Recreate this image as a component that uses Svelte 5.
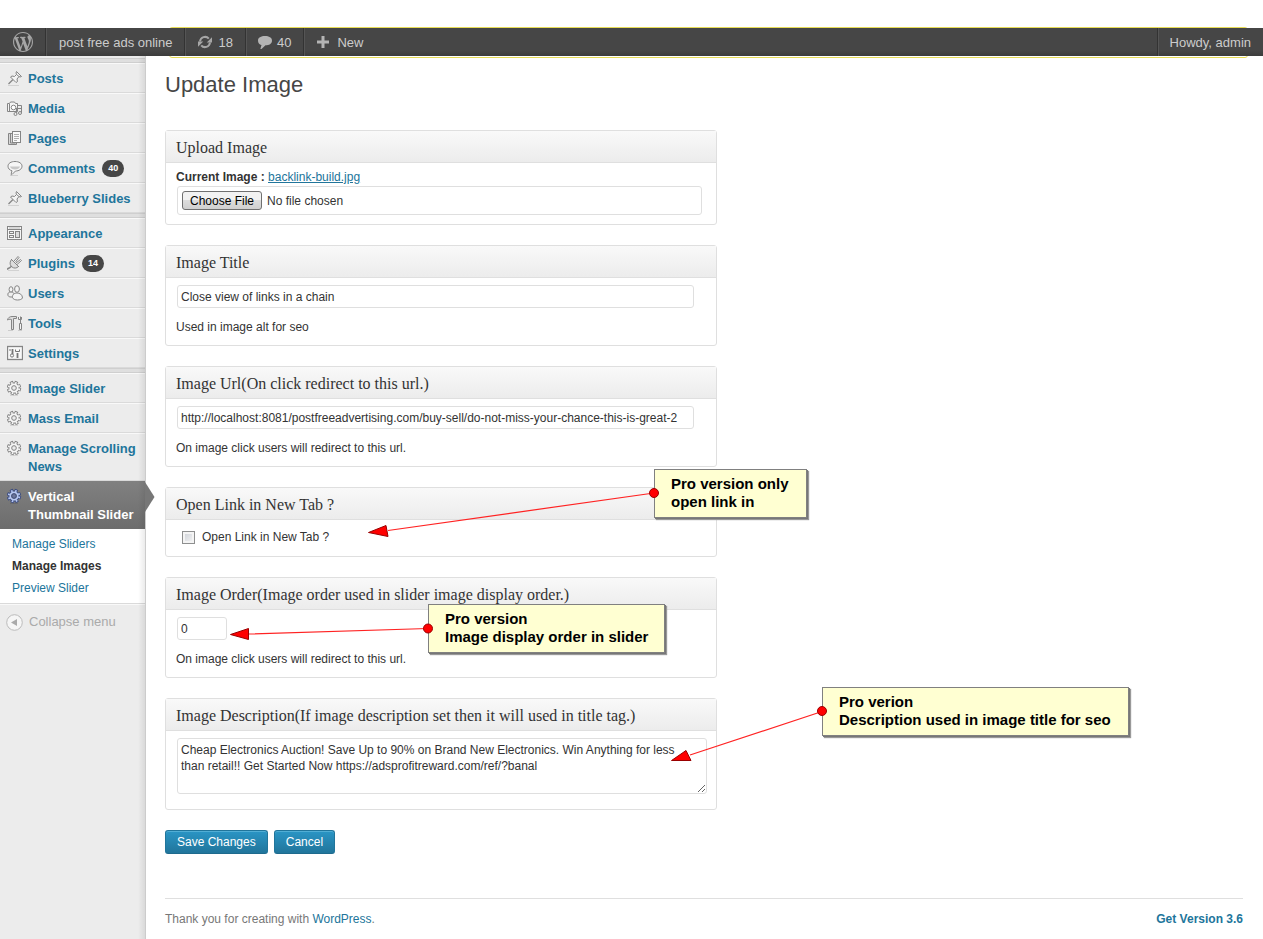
<script>
  const groups = [
    [
      { icon: 'pin', label: 'Posts' },
      { icon: 'media', label: 'Media' },
      { icon: 'pages', label: 'Pages' },
      { icon: 'comment', label: 'Comments', count: 40 },
      { icon: 'pin', label: 'Blueberry Slides' }
    ],
    [
      { icon: 'appearance', label: 'Appearance' },
      { icon: 'plug', label: 'Plugins', count: 14 },
      { icon: 'users', label: 'Users' },
      { icon: 'tools', label: 'Tools' },
      { icon: 'settings', label: 'Settings' }
    ],
    [
      { icon: 'gear', label: 'Image Slider' },
      { icon: 'gear', label: 'Mass Email' },
      { icon: 'gear', label: 'Manage Scrolling News' },
      { icon: 'gear', label: 'Vertical Thumbnail Slider', current: true }
    ]
  ];
  const submenu = [
    { label: 'Manage Sliders' },
    { label: 'Manage Images', current: true },
    { label: 'Preview Slider' }
  ];
  const description =
    'Cheap Electronics Auction! Save Up to 90% on Brand New Electronics. Win Anything for less than retail!! Get Started Now https://adsprofitreward.com/ref/?banal';
</script>

{#snippet icon(name)}
  <svg class="icon" viewBox="0 0 16 16" width="16" height="16" fill="none" stroke="#858585" stroke-width="1" aria-hidden="true">
    {#if name === 'pin'}
      <path d="M1 15.500h11" stroke="#d2d2d2" />
      <path d="M1.500 14 6 9.500" stroke-width="1.300" />
      <path d="M9.500 1.500l5 5-1.500.500-1-.500-2 2.500.500 2.500-1.500 1L3.500 7l1.500-1 2.500.500 2-2-.500-1.500z" fill="#f4f4f4" />
      <path d="M9.500 4.500l2.500 2" />
    {:else if name === 'media'}
      <path d="M.5 3.500h2l1-1.500h4l1 1.500h2v8H.5z" fill="#f4f4f4" />
      <circle cx="6.500" cy="7.500" r="2.300" fill="#fff" />
      <path d="M2.500 4v7M10.500 5.500h4v7.500" />
      <path d="M9.500 13.500V8.500h5" stroke-width="1.200" />
      <circle cx="8.500" cy="14" r="1.500" fill="#eee" /><circle cx="13" cy="13" r="1.500" fill="#eee" />
    {:else if name === 'pages'}
      <path d="M5 3.500H1.500v11h8v-2" fill="#d8d8d8" />
      <path d="M3.500 3v10h5" />
      <rect x="5.500" y="1.500" width="8" height="11" fill="#fafafa" />
      <path d="M7 4.500h5M7 6.500h5M7 8.500h5M7 10.500h3" stroke="#b0b0b0" />
    {:else if name === 'comment'}
      <path d="M3 15.500h8" stroke="#d0d0d0" />
      <path d="M8 1.500c4 0 7 1.800 7 4.700 0 3-3 4.800-6.500 4.800L5 14.500c-.500.400-1 .200-.800-.500L5 10.800C2.500 10 1 8.500 1 6.200c0-2.900 3-4.700 7-4.700z" fill="#f6f6f6" />
      <path d="M3 6.500h10c-.500 2-2.500 3-5 3s-4.500-1-5-3z" fill="#c8c8c8" stroke="none" />
    {:else if name === 'appearance'}
      <rect x=".5" y="1.500" width="14" height="13" fill="#f6f6f6" />
      <path d="M1 4.500h13" /><path d="M2 3h11" stroke="#bbb" />
      <rect x="2.500" y="6.500" width="4" height="2" /><rect x="2.500" y="10.500" width="4" height="2" /><rect x="8.500" y="6.500" width="4" height="6" fill="#ddd" />
    {:else if name === 'plug'}
      <path d="M1 15.500h11" stroke="#d2d2d2" />
      <path d="M0 14.500c1.500-2 2-.500 4-3" stroke-width="1.400" />
      <path d="M4.500 4.500l7 7c-2 2-4.500 2-6.500.500l-1-1C2.500 9 3 6.500 4.500 4.500z" fill="#ddd" />
      <path d="M7 6 11 1.500l1 1L8.500 7M10 9.500 14.500 5.500l-1-1L9 8M4 4l8 8" fill="#f4f4f4" />
    {:else if name === 'users'}
      <ellipse cx="4" cy="4.500" rx="1.900" ry="2.800" fill="#f4f4f4" />
      <path d="M1 10.500c-.800-2.500 1-3.500 3-3.500s3 1 3 2v3H4c-1.500 0-2.600-.500-3-1.500z" fill="#eee" />
      <ellipse cx="10" cy="4" rx="2.400" ry="3.300" fill="#f4f4f4" />
      <path d="M5.500 12.500C5 9.500 7.500 8 10 8s5.500 1.500 5.500 5c-1 2.500-9 3-10-.500z" fill="#f4f4f4" />
    {:else if name === 'tools'}
      <path d="M1 15.500h5M11 15.500h4" stroke="#ccc" />
      <path d="M.5 5C1 2.500 3 1.500 5 1.500h4.500v2h-3v11h-2v-10c-2-.500-3 0-4 .500z" fill="#ddd" />
      <path d="M13.500 1.500v7M11.500 2v2.500h3V2M12.500 14.500v-6h2v6z" fill="#f4f4f4" />
    {:else if name === 'settings'}
      <rect x=".5" y="1.500" width="15" height="13" fill="#f8f8f8" stroke-width="1.300" />
      <path d="M5.500 4v5M10.500 8v5" stroke-width="1.800" stroke="#777" />
      <circle cx="5" cy="10.500" r="1.600" stroke="#777" /><path d="M8.500 4.500v2h4v-2M3 4v2" stroke="#777" />
    {:else}
      <path class="ground" d="M3 15.500h8" stroke="#d4d4d4" />
      <circle class="edge" cx="7" cy="8" r="5.800" stroke-width="2.800" stroke-dasharray="3 1.555" />
      <circle class="edge" cx="7" cy="8" r="5" stroke-width="1.400" />
      <circle class="face" cx="7" cy="8" r="5.300" stroke="#f6f6f6" stroke-width="1.900" stroke-dasharray="1.600 2.563" stroke-dashoffset="-.5" />
      <circle class="face" cx="7" cy="8" r="3.700" stroke="#f6f6f6" stroke-width="1.800" />
      <circle class="hub" cx="7" cy="8" r="2.300" fill="#ececec" />
    {/if}
  </svg>
{/snippet}

<div class="page">
  <div class="notice-edge"></div>
  <header class="bar">
    <a class="cell logo" href="#wp" aria-label="About WordPress">
      <svg viewBox="0 0 20 20" width="20" height="20" fill="#a6a6a6"><path d="M20 10c0-5.510-4.490-10-10-10C4.480 0 0 4.490 0 10c0 5.520 4.480 10 10 10 5.510 0 10-4.480 10-10zM7.780 15.370L4.370 6.220c.550-.020 1.170-.080 1.170-.080.500-.060.440-1.130-.060-1.110 0 0-1.450.110-2.370.110-.180 0-.370 0-.580-.010C4.120 2.690 6.870 1.110 10 1.110c2.330 0 4.450.870 6.050 2.340-.680-.110-1.650.390-1.650 1.580 0 .740.450 1.360.900 2.100.350.610.550 1.360.550 2.460 0 1.490-1.400 5-1.400 5l-3.030-8.370c.540-.020.820-.170.820-.170.500-.050.440-1.250-.060-1.220 0 0-1.440.120-2.380.120-.870 0-2.330-.120-2.330-.120-.500-.030-.560 1.200-.060 1.220l.920.080 1.260 3.410zM17.410 10c.240-.640.740-1.870.430-4.250.700 1.290 1.050 2.710 1.050 4.250 0 3.290-1.730 6.240-4.400 7.780.970-2.590 1.940-5.200 2.920-7.780zM6.100 18.090C3.120 16.650 1.110 13.530 1.110 10c0-1.300.230-2.480.720-3.590C3.250 10.300 4.670 14.200 6.100 18.090zm4.030-6.630l2.580 6.980c-.860.290-1.760.450-2.710.450-.790 0-1.570-.110-2.290-.330.810-2.380 1.620-4.740 2.420-7.100z" /></svg>
    </a>
    <a class="cell" href="#site"><span>post free ads online</span></a>
    <a class="cell counter" href="#updates">
      <svg viewBox="0 0 16 14" width="16" height="14" fill="none" stroke="#a6a6a6" stroke-width="2"><path d="M3 6.500A5 5 0 0 1 11.800 3.700M13 7.500A5 5 0 0 1 4.200 10.300" /><path d="M15 2.200v5.300H9.700zM1 11.800V6.500h5.300z" fill="#a6a6a6" stroke="none" /></svg>
      <span>18</span>
    </a>
    <a class="cell counter" href="#comments">
      <svg viewBox="0 0 14 14" width="14" height="14" fill="#b4b4b4"><path d="M7 1c4 0 7 1.500 7 4.700S11 10.300 7.500 10.300L3.500 14c-.700.500-1.300.200-1-.600l1-3.400C1.300 9.300 0 7.900 0 5.700 0 2.500 3 1 7 1z" /></svg>
      <span>40</span>
    </a>
    <a class="cell new" href="#new">
      <svg viewBox="0 0 12 12" width="12" height="12" fill="#b4b4b4"><path d="M4.500 0h3v4.500H12v3H7.500V12h-3V7.500H0v-3h4.500z" /></svg>
      <span>New</span>
    </a>
    <a class="cell account" href="#profile"><span>Howdy, admin</span></a>
  </header>

  <div class="columns">
    <nav class="side">
      {#each groups as group}
        <div class="separator"></div>
        <ul>
          {#each group as item}
            <li class:current={item.current}>
              <a href="#menu">
                {@render icon(item.icon)}
                <span>{item.label}</span>
                {#if item.count}<b class="count">{item.count}</b>{/if}
              </a>
              {#if item.current}
                <svg class="tip" viewBox="0 0 10 30" width="10" height="30"><path d="M0 0l9.500 15L0 30z" fill="#777" /></svg>
              {/if}
            </li>
          {/each}
        </ul>
      {/each}
      <ul class="submenu">
        {#each submenu as item}
          <li><a href="#submenu" class:here={item.current}>{item.label}</a></li>
        {/each}
      </ul>
      <button class="collapse" type="button">
        <svg viewBox="0 0 17 17" width="17" height="17"><circle cx="8.500" cy="8.500" r="7.800" fill="#f6f6f6" stroke="#bbb" /><path d="M5 8.500l6-3.500v7z" fill="#aaa" /></svg>
        Collapse menu
      </button>
    </nav>

    <main>
      <h1>Update Image</h1>
      <form>
        <section>
          <h2>Upload Image</h2>
          <div class="inside upload">
            <p><label for="file">Current Image :</label> <a href="#image">backlink-build.jpg</a></p>
            <input id="file" type="file" />
          </div>
        </section>
        <section>
          <h2><label for="title">Image Title</label></h2>
          <div class="inside">
            <input id="title" class="wide" type="text" value="Close view of links in a chain" />
            <p class="hint">Used in image alt for seo</p>
          </div>
        </section>
        <section>
          <h2><label for="url">Image Url(On click redirect to this url.)</label></h2>
          <div class="inside">
            <input id="url" class="wide" type="text" value="http://localhost:8081/postfreeadvertising.com/buy-sell/do-not-miss-your-chance-this-is-great-2" />
            <p class="hint">On image click users will redirect to this url.</p>
          </div>
        </section>
        <section>
          <h2>Open Link in New Tab ?</h2>
          <div class="inside">
            <label class="check"><input type="checkbox" /> Open Link in New Tab ?</label>
          </div>
        </section>
        <section>
          <h2><label for="order">Image Order(Image order used in slider image display order.)</label></h2>
          <div class="inside">
            <input id="order" class="short" type="text" value="0" />
            <p class="hint">On image click users will redirect to this url.</p>
          </div>
        </section>
        <section>
          <h2><label for="description">Image Description(If image description set then it will used in title tag.)</label></h2>
          <div class="inside">
            <textarea id="description" value={description} spellcheck="false"></textarea>
          </div>
        </section>
        <div class="actions">
          <button type="button">Save Changes</button>
          <button type="button">Cancel</button>
        </div>
      </form>
      <footer>
        <span>Thank you for creating with <a href="#wordpress">WordPress</a>.</span>
        <a class="version" href="#version">Get Version 3.6</a>
      </footer>
    </main>
  </div>

  <!-- Callouts floating over the form -->
  <aside class="note open">Pro version only<br />open link in</aside>
  <aside class="note order">Pro version<br />Image display order in slider</aside>
  <aside class="note describe">Pro verion<br />Description used in image title for seo</aside>
  <svg class="arrows" viewBox="0 0 1140 770" width="1140" height="770" aria-hidden="true">
    <g stroke="#f22" stroke-width="1.200"><path d="M388 530.500 654 493M249 634 428 628.500M690 755 822 711.500" /></g>
    <g fill="#f00" stroke="#900" stroke-width="1">
      <path d="M368.500 532.500 386 525.500l2 11zM230.500 634.500l18-6v11zM671.500 760.500 686 750.500l5 10z" />
      <circle cx="654" cy="493" r="4.500" /><circle cx="428" cy="628.500" r="4.500" /><circle cx="822" cy="711" r="4.500" />
    </g>
  </svg>
</div>

<style>
  :global(body) { margin: 0; background: #fff; }
  .page {
    position: relative;
    display: flex;
    flex-direction: column;
    box-sizing: border-box;
    min-height: 100vh;
    padding-top: 28px;
    font: 12px/16px "Liberation Sans", Arial, sans-serif;
    color: #333;
  }
  a { color: #21759b; }
  ul { list-style: none; margin: 0; padding: 0; }
  p { margin: 0; }

  .notice-edge {
    position: absolute;
    top: 27px;
    left: 169px;
    right: 15px;
    height: 29px;
    border: 1px solid #e6db55;
    border-radius: 3px;
  }
  .bar {
    position: relative;
    display: flex;
    height: 28px;
    background: linear-gradient(#464646 0, #464646 80%, #3c3c3c);
    font-size: 13px;
    line-height: 28px;
  }
  .cell {
    display: flex;
    align-items: center;
    padding: 0 12px 0 13px;
    border-right: 1px solid #333;
    box-shadow: 1px 0 #555;
    color: #ccc;
    text-decoration: none;
    white-space: nowrap;
  }
  .cell span { padding-top: 1px; }
  .cell.counter { gap: 5px; padding-left: 12px; }
  .cell.new { border-right: 0; box-shadow: none; gap: 8px; }
  .cell.account { margin-left: auto; padding-left: 12px; border-right: 0; border-left: 1px solid #333; box-shadow: inset 1px 0 #555; }

  .columns { display: flex; flex: 1; }
  .side {
    position: relative;
    flex: none;
    width: 145px;
    padding-top: 2px;
    border-right: 1px solid #ccc;
    background: #ececec;
  }
  .side::after {
    content: "";
    position: absolute;
    inset: 0 0 0 auto;
    width: 7px;
    background: linear-gradient(90deg, transparent, rgba(0, 0, 0, 0.08));
    pointer-events: none;
  }
  .separator {
    height: 3px;
    border: 1px solid #cfcfcf;
    border-width: 1px 0;
    background: #dfdfdf;
  }
  .side li { position: relative; }
  .side li > a {
    display: flex;
    align-items: flex-start;
    padding: 6px 5px 4px 7px;
    border-top: 1px solid #f9f9f9;
    border-bottom: 1px solid #dadada;
    font: bold 13px/18px "Liberation Sans", Arial, sans-serif;
    text-decoration: none;
  }
  .icon { flex: none; margin-right: 5px; }
  .count {
    margin-left: 7px;
    padding: 0 6px;
    border-radius: 10px;
    background: #464646;
    color: #fff;
    font-size: 9px;
    line-height: 17px;
  }
  .side li.current > a {
    border-color: #808080 #777 #6d6d6d;
    background: linear-gradient(#808080, #6d6d6d);
    color: #fff;
  }
  .current .edge { stroke: #3d4d80; }
  .current .face { stroke: #b7c8f4; }
  .current .hub { fill: #6d7699; stroke: #3d4d80; }
  .current .ground { stroke: #6a6a6a; }
  .tip { position: absolute; top: 1px; left: 145px; }
  .side .submenu { padding: 4px 0; border-bottom: 1px solid #dadada; background: #fff; }
  .side .submenu a { padding: 2px 12px; border: 0; font-size: 12px; font-weight: normal; }
  .side .submenu a.here { color: #333; font-weight: bold; }
  .collapse {
    display: flex;
    align-items: center;
    gap: 6px;
    width: 100%;
    padding: 8px 6px;
    border: 0;
    border-top: 1px solid #f9f9f9;
    background: none;
    color: #aaa;
    font: 13px/18px "Liberation Sans", Arial, sans-serif;
  }

  main { display: flex; flex: 1; flex-direction: column; min-width: 0; padding: 0 20px 0 19px; }
  h1 {
    margin: 0 0 30px;
    padding-top: 14px;
    font-size: 22px;
    font-weight: normal;
    line-height: 30px;
    color: #464646;
  }
  form { display: flex; flex-direction: column; gap: 20px; max-width: 552px; }
  section { border: 1px solid #dfdfdf; border-radius: 3px; }
  h2 {
    margin: 0;
    padding: 3px 10px 0;
    border-bottom: 1px solid #dfdfdf;
    background: linear-gradient(#f9f9f9, #ececec);
    font: 16px/28px "Liberation Serif", Georgia, serif;
  }
  .inside { padding: 7px 9px 10px 11px; }
  .inside.upload { padding: 6px 14px 9px 11px; }
  .inside.upload p { margin-left: -1px; line-height: 17px; }
  .inside label[for="file"] { font-weight: bold; }
  .hint { margin: 11px 0 0 -1px; }
  input, textarea {
    display: block;
    box-sizing: border-box;
    margin: 0;
    border: 1px solid #dfdfdf;
    border-radius: 3px;
    background: #fff;
    color: #333;
    font: 12px/16px "Liberation Sans", Arial, sans-serif;
  }
  input[type="text"] { height: 23px; padding: 3px; }
  .wide { width: calc(100% - 13px); }
  .short { width: 50px; }
  input[type="file"] { width: 100%; height: 29px; padding: 4px; }
  input::file-selector-button {
    height: 19px;
    margin: 0 5px 0 0;
    padding: 0 7px;
    border: 1px solid #707070;
    border-radius: 3px;
    background: linear-gradient(#f2f2f2 50%, #ddd 50%, #cfcfcf);
    color: #000;
    font: 12px/16px "Liberation Sans", Arial, sans-serif;
  }
  .check { display: flex; align-items: center; gap: 7px; padding: 2px 5px 1px; }
  input[type="checkbox"] {
    appearance: none;
    width: 13px;
    height: 13px;
    border: 1px solid #8e8f8f;
    border-radius: 0;
    background: linear-gradient(135deg, #cbcfd5, #f6f6f6);
    box-shadow: inset 0 0 0 2px #f4f4f4;
  }
  textarea { width: 100%; height: 56px; margin-bottom: 5px; padding: 3px 20px 3px 3px; resize: both; overflow: auto; }
  .actions { display: flex; gap: 6px; }
  .actions button {
    height: 24px;
    padding: 0 11px;
    border: 1px solid #21759b;
    border-bottom-color: #1e6a8d;
    border-radius: 3px;
    background: linear-gradient(#2a95c5, #21759b);
    box-shadow: inset 0 1px 0 rgba(120, 200, 230, 0.5);
    color: #fff;
    font: 12px/20px "Liberation Sans", Arial, sans-serif;
  }
  footer {
    display: flex;
    justify-content: space-between;
    margin-top: 44px;
    padding: 12px 0;
    border-top: 1px solid #dfdfdf;
    color: #777;
  }
  footer a { text-decoration: none; }
  .version { font-weight: bold; }

  .note {
    position: absolute;
    box-sizing: border-box;
    height: 49px;
    padding: 5px 16px;
    border: 1px solid #808080;
    background: #ffffd2;
    box-shadow: 1px 1px #777, 2px 2px 1px #999;
    color: #000;
    font: bold 15px/18px "Liberation Sans", Arial, sans-serif;
    white-space: nowrap;
  }
  .open { top: 469px; left: 654px; width: 153px; }
  .order { top: 604px; left: 428px; width: 237px; }
  .describe { top: 687px; left: 822px; width: 307px; }
  .arrows { position: absolute; top: 0; left: 0; pointer-events: none; overflow: visible; }
</style>
